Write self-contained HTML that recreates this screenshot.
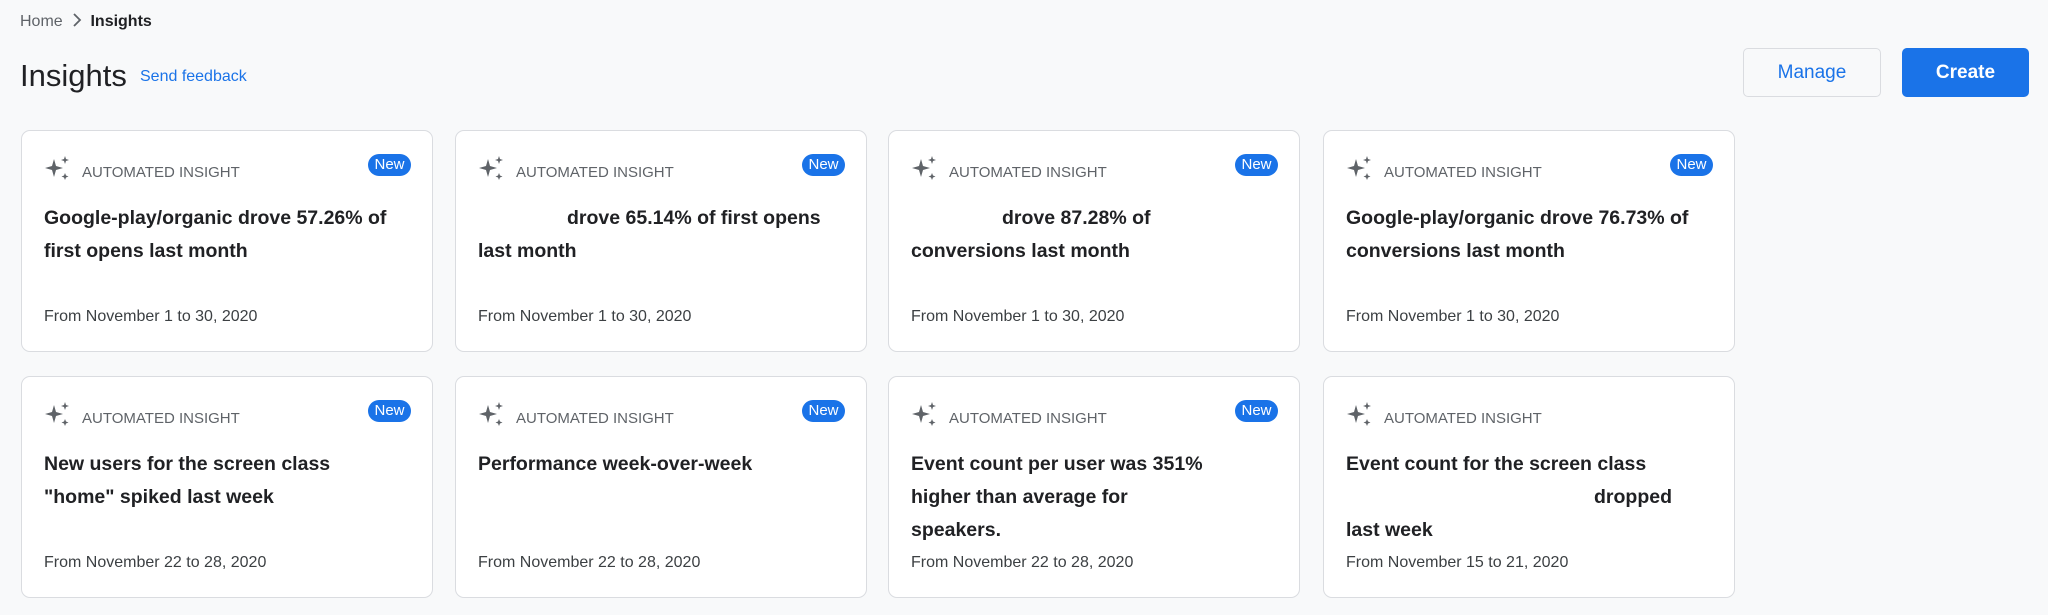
<!DOCTYPE html>
<html><head><meta charset="utf-8"><style>
*{box-sizing:border-box;margin:0;padding:0}
body{width:2048px;height:615px;background:#f8f9fa;font-family:"Liberation Sans",Arial,sans-serif;position:relative;overflow:hidden;color:#202124}
.bc{position:absolute;left:20px;top:13px;font-size:16px;color:#5f6368}
.bc b{color:#202124;font-weight:bold}
.h1{position:absolute;left:20px;top:58px;font-size:31px;color:#202124}
.fb{position:absolute;left:140px;top:68px;font-size:16px;color:#1a73e8}
.btn{position:absolute;top:48px;height:49px;border-radius:5px;font-size:19px;display:flex;align-items:center;justify-content:center}
.mg{left:1743px;width:138px;border:1px solid #dadce0;color:#1a73e8;background:#f8f9fa}
.cr{left:1902px;width:127px;background:#1a73e8;color:#fff;font-weight:bold}
.card{position:absolute;width:412px;height:222px;background:#fff;border:1px solid #dadce0;border-radius:9px}
.ic{position:absolute;left:22px;top:24px}
.lb{position:absolute;left:60px;top:33px;font-size:15px;color:#5f6368}
.nw{position:absolute;right:21px;top:23px;width:43px;height:22px;border-radius:11px;background:#1a73e8;color:#fff;font-size:15px;text-align:center;line-height:22px}
.tt{position:absolute;left:22px;top:71px;width:375px;font-size:19.5px;line-height:33px;font-weight:bold;color:#202124}
.dt{position:absolute;left:22px;top:177px;font-size:16px;color:#3c4043}
</style></head><body>
<div class="bc">Home &nbsp;<svg width="10" height="14" viewBox="0 0 10 14" style="vertical-align:-1px"><path d="M2 1 L8 7 L2 13" fill="none" stroke="#5f6368" stroke-width="1.8"/></svg>&nbsp; <b>Insights</b></div>
<div class="h1">Insights</div>
<div class="fb">Send feedback</div>
<div class="btn mg">Manage</div>
<div class="btn cr">Create</div>

<svg width="0" height="0" style="position:absolute"><defs><symbol id="sp" viewBox="0 0 26 26"><path d="M10 4 L12 11 L19 13 L12 15 L10 22 L8 15 L1 13 L8 11Z" fill="#5f6368"/><path d="M21 1 L22 4 L25 5 L22 6 L21 9 L20 6 L17 5 L20 4Z" fill="#5f6368"/><path d="M21 18 L22 20.5 L24.5 21.5 L22 22.5 L21 25 L20 22.5 L17.5 21.5 L20 20.5Z" fill="#5f6368"/></symbol></defs></svg>

<div class="card" style="left:21px;top:130px"><svg class="ic" width="26" height="26"><use href="#sp"/></svg><div class="lb">AUTOMATED INSIGHT</div><div class="nw">New</div><div class="tt">Google-play/organic drove 57.26% of<br>first opens last month</div><div class="dt">From November 1 to 30, 2020</div></div>
<div class="card" style="left:455px;top:130px"><svg class="ic" width="26" height="26"><use href="#sp"/></svg><div class="lb">AUTOMATED INSIGHT</div><div class="nw">New</div><div class="tt"><span style="display:inline-block;width:89px"></span>drove 65.14% of first opens<br>last month</div><div class="dt">From November 1 to 30, 2020</div></div>
<div class="card" style="left:888px;top:130px"><svg class="ic" width="26" height="26"><use href="#sp"/></svg><div class="lb">AUTOMATED INSIGHT</div><div class="nw">New</div><div class="tt"><span style="display:inline-block;width:91px"></span>drove 87.28% of<br>conversions last month</div><div class="dt">From November 1 to 30, 2020</div></div>
<div class="card" style="left:1323px;top:130px"><svg class="ic" width="26" height="26"><use href="#sp"/></svg><div class="lb">AUTOMATED INSIGHT</div><div class="nw">New</div><div class="tt">Google-play/organic drove 76.73% of<br>conversions last month</div><div class="dt">From November 1 to 30, 2020</div></div>

<div class="card" style="left:21px;top:376px"><svg class="ic" width="26" height="26"><use href="#sp"/></svg><div class="lb">AUTOMATED INSIGHT</div><div class="nw">New</div><div class="tt">New users for the screen class<br>"home" spiked last week</div><div class="dt">From November 22 to 28, 2020</div></div>
<div class="card" style="left:455px;top:376px"><svg class="ic" width="26" height="26"><use href="#sp"/></svg><div class="lb">AUTOMATED INSIGHT</div><div class="nw">New</div><div class="tt">Performance week-over-week</div><div class="dt">From November 22 to 28, 2020</div></div>
<div class="card" style="left:888px;top:376px"><svg class="ic" width="26" height="26"><use href="#sp"/></svg><div class="lb">AUTOMATED INSIGHT</div><div class="nw">New</div><div class="tt">Event count per user was 351%<br>higher than average for<br>speakers.</div><div class="dt">From November 22 to 28, 2020</div></div>
<div class="card" style="left:1323px;top:376px"><svg class="ic" width="26" height="26"><use href="#sp"/></svg><div class="lb">AUTOMATED INSIGHT</div><div class="tt">Event count for the screen class<br><span style="display:inline-block;width:248px"></span>dropped<br>last week</div><div class="dt">From November 15 to 21, 2020</div></div>
</body></html>
